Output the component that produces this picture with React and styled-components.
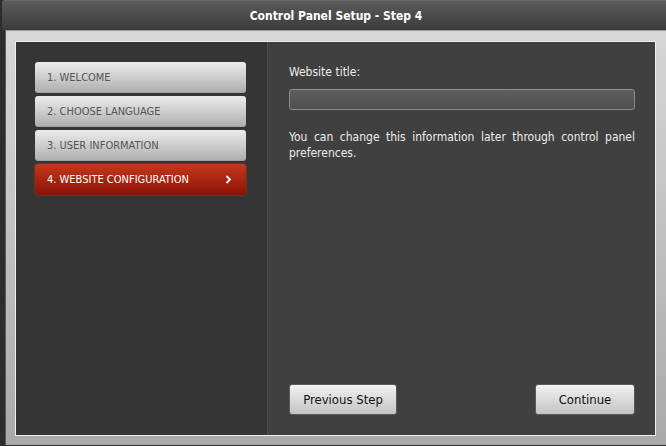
import styled, { createGlobalStyle } from "styled-components";

const GlobalStyle = createGlobalStyle`
  html, body {
    margin: 0;
    padding: 0;
    background: #2d2d2d;
  }
  body {
    font-family: "DejaVu Sans Condensed", "DejaVu Sans", sans-serif;
  }
`;

const Window = styled.div`
  width: 666px;
  height: 446px;
  display: flex;
  flex-direction: column;
  background: #2d2d2d;
  overflow: hidden;
`;

const TitleBar = styled.div`
  height: 30px;
  margin-left: 2px;
  border-top: 1px solid #6a6a6a;
  border-radius: 3px 0 0 0;
  box-sizing: border-box;
  background: linear-gradient(#5b5b5b, #3b3b3b);
  display: flex;
  align-items: center;
  justify-content: center;
  padding-left: 4px;
  color: #fff;
  font-size: 12px;
  font-weight: bold;
`;

const Frame = styled.div`
  height: 415px;
  margin-left: 5px;
  box-sizing: border-box;
  padding: 10px 10px 9px 9px;
  background: linear-gradient(#d7d7d7, #a9a9a9);
  border-top: 1px solid #9a9a9a;
  border-left: 1px solid #5a5a5a;
  display: flex;
`;

const Inner = styled.div`
  flex: 1;
  display: flex;
  border: 1px solid #efefef;
`;

const Sidebar = styled.div`
  width: 252px;
  background: #353535;
  border-right: 1px solid #4c4c4c;
  padding: 20px 0 0 19px;
  box-sizing: border-box;
  display: flex;
  flex-direction: column;
  gap: 3px;
`;

const Step = styled.div`
  width: 211px;
  height: 31px;
  box-sizing: border-box;
  border-radius: 3px;
  padding: 0 14px 0 12px;
  display: flex;
  align-items: center;
  justify-content: space-between;
  font-size: 11px;
  color: ${(p) => (p.$active ? "#ffffff" : "#555555")};
  background: ${(p) =>
    p.$active
      ? "linear-gradient(#c5381c, #8c1108)"
      : "linear-gradient(#ececec, #adadad)"};
  box-shadow: ${(p) =>
    p.$active
      ? "0 0 2px rgba(220, 70, 30, 0.8)"
      : "inset 0 -1px 0 rgba(0, 0, 0, 0.08)"};
`;

const Content = styled.div`
  flex: 1;
  background: #404040;
  padding: 22px 20px 20px 21px;
  display: flex;
  flex-direction: column;
  color: #ededed;
`;

const Label = styled.div`
  font-size: 12px;
  line-height: 16px;
`;

const TextInput = styled.div`
  margin-top: 9px;
  height: 21px;
  box-sizing: border-box;
  border: 1px solid #8c8c8c;
  border-radius: 3px;
  background: linear-gradient(#5e5e5e, #4f4f4f);
`;

const Note = styled.p`
  margin: 19px 0 0;
  font-size: 12px;
  line-height: 16px;
  text-align: justify;
`;

const Actions = styled.div`
  margin-top: auto;
  display: flex;
  justify-content: space-between;
`;

const Button = styled.button`
  width: ${(p) => p.$width}px;
  height: 31px;
  border: 1px solid #5a5a5a;
  border-radius: 3px;
  background: linear-gradient(#f2f2f2, #c3c3c3);
  font-family: inherit;
  font-size: 13px;
  color: #111;
  padding: 0;
`;

const Chevron = () => (
  <svg width="7" height="9" viewBox="0 0 7 9">
    <polyline points="1.5,1 5,4.5 1.5,8" fill="none" stroke="#fff" strokeWidth="1.8" />
  </svg>
);

const steps = ["1. WELCOME", "2. CHOOSE LANGUAGE", "3. USER INFORMATION", "4. WEBSITE CONFIGURATION"];

export default function App() {
  return (
    <Window>
      <GlobalStyle />
      <TitleBar>Control Panel Setup - Step 4</TitleBar>
      <Frame>
        <Inner>
          <Sidebar>
            {steps.map((s, i) => {
              const active = i === steps.length - 1;
              return (
                <Step key={s} $active={active}>
                  <span>{s}</span>
                  {active && <Chevron />}
                </Step>
              );
            })}
          </Sidebar>
          <Content>
            <Label>Website title:</Label>
            <TextInput />
            <Note>
              You can change this information later through control panel preferences.
            </Note>
            <Actions>
              <Button $width={108}>Previous Step</Button>
              <Button $width={100}>Continue</Button>
            </Actions>
          </Content>
        </Inner>
      </Frame>
    </Window>
  );
}
